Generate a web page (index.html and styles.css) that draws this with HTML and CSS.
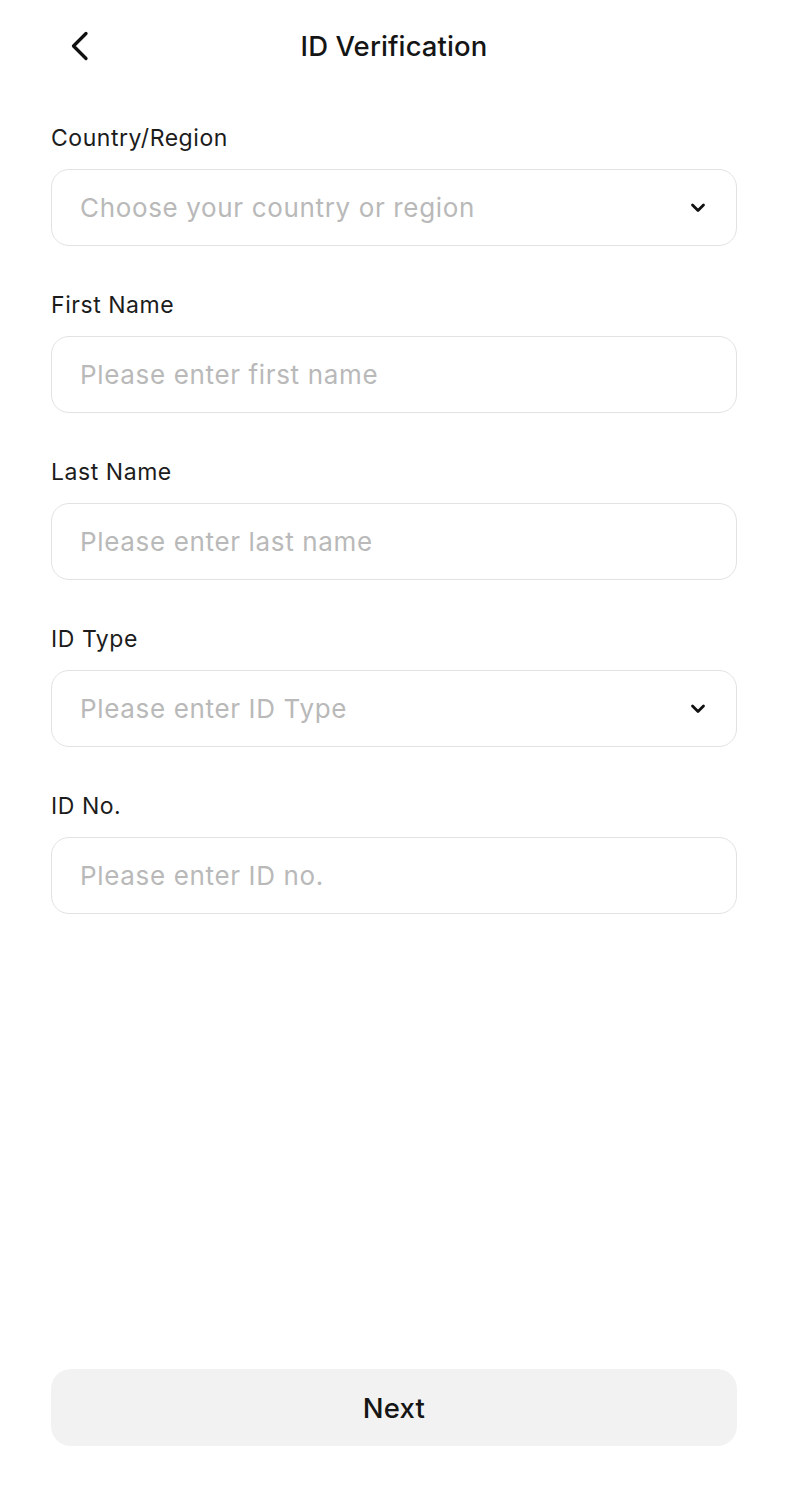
FILE: index.html
```html
<!DOCTYPE html>
<html lang="en">
<head>
<meta charset="utf-8">
<title>ID Verification</title>
<link rel="stylesheet" href="styles.css">
</head>
<body>
<div class="page">
  <header class="header">
    <button class="back" aria-label="Back">
      <svg width="30" height="40" viewBox="0 0 30 40"><path d="M21 7.5 L8.5 20 L21 32.5" fill="none" stroke="#111" stroke-width="3.3" stroke-linecap="round" stroke-linejoin="round"/></svg>
    </button>
    <h1 class="title">ID Verification</h1>
  </header>
  <main class="form">
    <div class="field">
      <label class="label">Country/Region</label>
      <div class="input select">
        <span class="placeholder">Choose your country or region</span>
        <svg class="caret" width="16" height="12" viewBox="0 0 16 12"><path d="M2.5 3 L8 8.5 L13.5 3" fill="none" stroke="#111" stroke-width="2.8" stroke-linecap="round" stroke-linejoin="round"/></svg>
      </div>
    </div>
    <div class="field">
      <label class="label">First Name</label>
      <div class="input"><span class="placeholder">Please enter first name</span></div>
    </div>
    <div class="field">
      <label class="label">Last Name</label>
      <div class="input"><span class="placeholder">Please enter last name</span></div>
    </div>
    <div class="field">
      <label class="label">ID Type</label>
      <div class="input select">
        <span class="placeholder">Please enter ID Type</span>
        <svg class="caret" width="16" height="12" viewBox="0 0 16 12"><path d="M2.5 3 L8 8.5 L13.5 3" fill="none" stroke="#111" stroke-width="2.8" stroke-linecap="round" stroke-linejoin="round"/></svg>
      </div>
    </div>
    <div class="field">
      <label class="label">ID No.</label>
      <div class="input"><span class="placeholder">Please enter ID no.</span></div>
    </div>
  </main>
  <button class="next">Next</button>
</div>
</body>
</html>
```
FILE: styles.css
```css
* { box-sizing: border-box; }
html, body { margin: 0; padding: 0; background: #fff; }
body { font-family: Inter, "Noto Sans", "Liberation Sans", sans-serif; color: #1a1a1a; }
.page {
  width: 786px;
  min-height: 1490px;
  display: flex;
  flex-direction: column;
  padding: 0 49px 44px 51px;
}
.header {
  position: relative;
  height: 92px;
  display: flex;
  align-items: center;
  justify-content: center;
}
.back {
  position: absolute;
  left: 14px;
  top: 26px;
  width: 30px;
  height: 40px;
  padding: 0;
  border: 0;
  background: none;
  display: flex;
}
.title {
  margin: 0;
  font-size: 27.5px;
  font-weight: 500;
  letter-spacing: 0.1px;
  color: #151515;
  line-height: 40px;
}
.form {
  padding-top: 31px;
  display: flex;
  flex-direction: column;
  gap: 44px;
}
.field { display: flex; flex-direction: column; }
.label {
  font-size: 23px;
  line-height: 30px;
  font-weight: 400;
  color: #1c1c1c;
  letter-spacing: 0.55px;
  margin-bottom: 16px;
}
.input {
  height: 77px;
  border: 1.5px solid #e2e2e2;
  border-radius: 18px;
  display: flex;
  align-items: center;
  padding: 0 30px 0 28px;
}
.placeholder {
  font-size: 26px;
  color: #b9b9b9;
  letter-spacing: 0.65px;
  flex: 1;
}
.caret { flex: none; }
.next {
  margin-top: auto;
  height: 77px;
  width: 100%;
  border: 0;
  border-radius: 20px;
  background: #f2f2f2;
  font-family: inherit;
  font-size: 27.5px;
  font-weight: 500;
  letter-spacing: 0.2px;
  color: #151515;
}
```
